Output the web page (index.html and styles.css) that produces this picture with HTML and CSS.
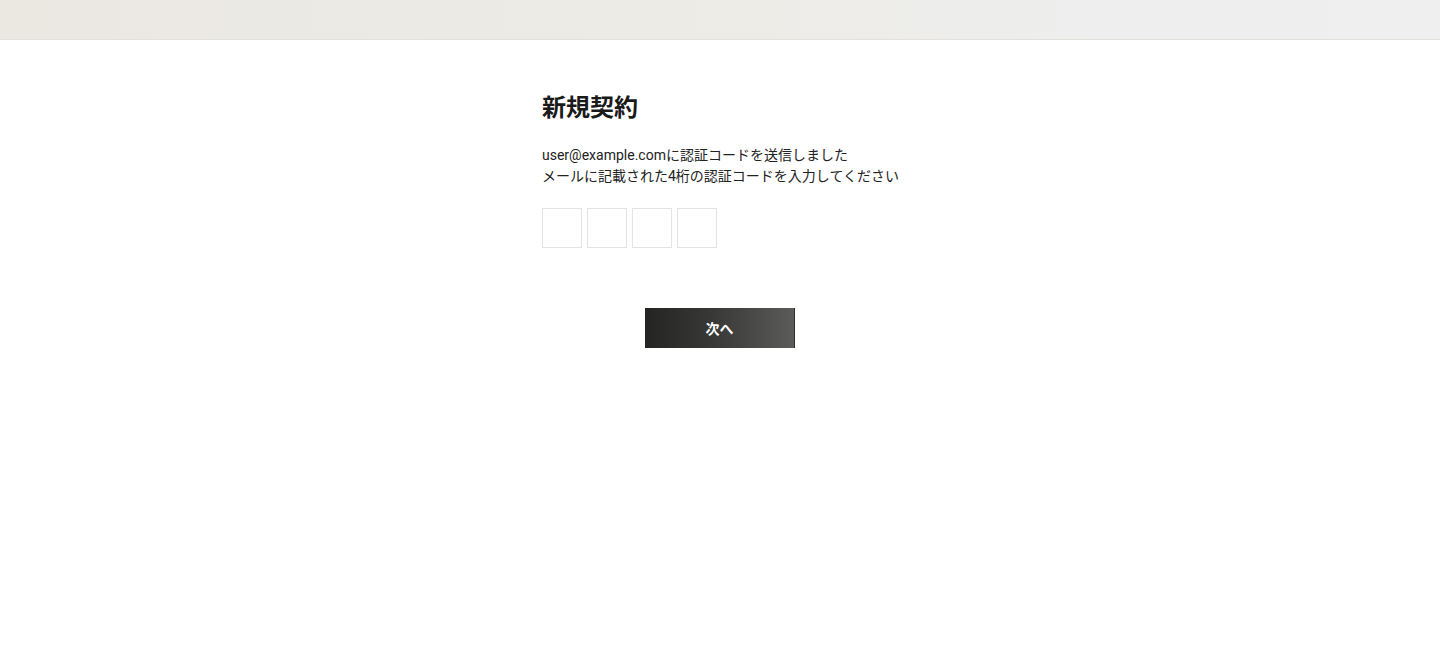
FILE: index.html
```html
<!DOCTYPE html>
<html lang="ja">
<head>
    <meta charset="UTF-8">
    <meta name="viewport" content="width=device-width, initial-scale=1.0">
    <title>新規契約</title>
    <link rel="stylesheet" href="styles.css">
</head>
<body>
    <header class="site-header"></header>

    <main class="content">
        <h1 class="page-title">新規契約</h1>
        <p class="lead">
            user@example.comに認証コードを送信しました<br>
            メールに記載された4桁の認証コードを入力してください
        </p>

        <form class="code-form">
            <div class="code-inputs">
                <input type="text" class="code-box" maxlength="1" inputmode="numeric">
                <input type="text" class="code-box" maxlength="1" inputmode="numeric">
                <input type="text" class="code-box" maxlength="1" inputmode="numeric">
                <input type="text" class="code-box" maxlength="1" inputmode="numeric">
            </div>
            <div class="actions">
                <button type="submit" class="btn-next">次へ</button>
            </div>
        </form>
    </main>
</body>
</html>
```

FILE: styles.css
```css
body {
    margin: 0;
    padding: 0;
    background: #fff;
    color: #1a1a1a;
    font-family: Roboto, "Noto Sans CJK JP", sans-serif;
}

.site-header {
    height: 39px;
    background: linear-gradient(90deg, #eae8e1 0%, #ecebe5 45%, #eeeeee 75%, #efeff0 100%);
    border-bottom: 1px solid #e2e1dc;
}

.content {
    width: 356px;
    margin: 0 auto;
    padding-top: 52px;
}

.page-title {
    margin: 0;
    font-size: 24px;
    font-weight: 700;
    line-height: 32px;
}

.lead {
    margin: 21px 0 0;
    font-size: 14px;
    line-height: 21px;
    color: #222;
    white-space: nowrap;
}

.code-inputs {
    display: flex;
    gap: 5px;
    margin-top: 21px;
}

.code-box {
    box-sizing: border-box;
    width: 40px;
    height: 40px;
    margin: 0;
    padding: 0;
    border: 1px solid #e3e3e1;
    border-radius: 0;
    background: #fff;
    text-align: center;
    font-size: 18px;
    font-family: inherit;
}

.actions {
    display: flex;
    justify-content: center;
    margin-top: 60px;
}

.btn-next {
    width: 150px;
    height: 40px;
    border: none;
    border-right: 1px solid #2e2e2d;
    border-radius: 0;
    background: linear-gradient(90deg, #242422 0%, #383836 45%, #5b5b59 100%);
    color: #fff;
    font-family: inherit;
    font-size: 14px;
    font-weight: 700;
    cursor: pointer;
}
```
